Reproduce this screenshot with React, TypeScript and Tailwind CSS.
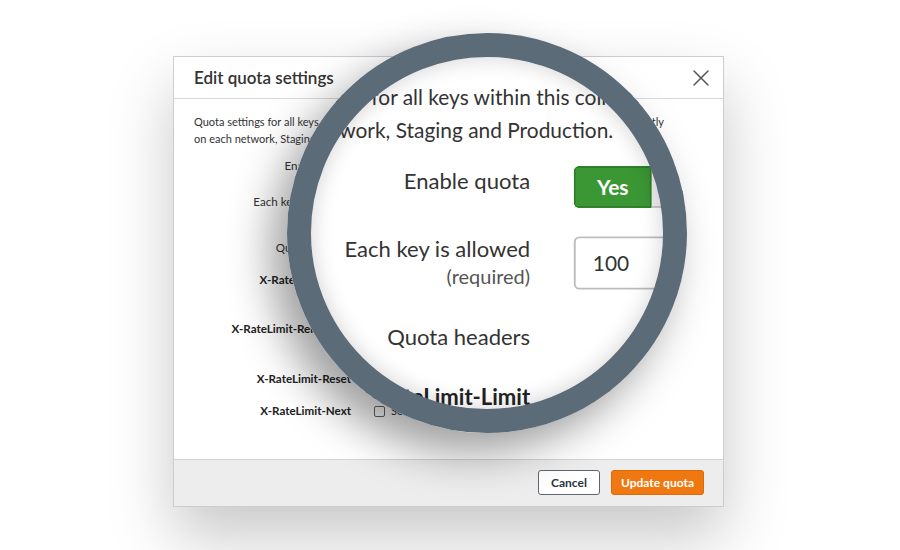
import { X } from 'lucide-react';

const headerRows = [
  { name: 'X-RateLimit-Limit', note: 'Total requests allowed in the period', h: 'h-[49px]' },
  { name: 'X-RateLimit-Remaining', note: 'Requests left in the period', h: 'h-[50px]' },
  { name: 'X-RateLimit-Reset', note: '', h: 'h-[32px]' },
  { name: 'X-RateLimit-Next', note: '', h: 'h-[32px]' },
];

function Dialog({ flat }: { flat?: boolean }) {
  return (
    <div
      className={`w-[551px] h-[451px] bg-white border border-[#c9ced4] flex flex-col ${
        flat ? '' : 'shadow-[0_30px_60px_rgba(0,0,0,0.22)]'
      }`}
    >
      {/* Header */}
      <div className="h-[42px] shrink-0 flex items-center justify-between pl-5 pr-[8px] border-b border-[#d6d9dd]">
        <h2 className="text-[17px] font-semibold text-[#333]">Edit quota settings</h2>
        <X size={28} strokeWidth={1.25} className="text-[#555]" />
      </div>

      {/* Body */}
      <div className="flex-1 px-5 pt-[14px] text-[11px] text-[#333]">
        <p className="leading-[17px] whitespace-nowrap">
          Quota settings for all keys within this collection are set and counted separately and independently
          <br />
          on each network, Staging and Production.
        </p>

        <div className="mt-[11px] flex flex-col text-[11.6px]">
          <div className="flex items-start gap-[23px] h-[22px]">
            <div className="w-[157px] text-right leading-4">Enable quota</div>
            <div className="flex h-[22px] rounded-[3px] overflow-hidden text-[11px]">
              <span className="w-[41px] flex items-center justify-center bg-[#3b9734] border border-[#2f7f29] text-white font-bold">
                Yes
              </span>
              <span className="w-[36px] flex items-center justify-center bg-[#efefef] border border-l-0 border-[#c8c8c8] text-[#555]">
                No
              </span>
            </div>
          </div>

          <div className="mt-[15px] flex items-start gap-[23px] h-[28px]">
            <div className="w-[157px] text-right -mt-px">
              <div className="leading-4">Each key is allowed</div>
              <div className="leading-[13px] text-[10.5px] text-[#555]">(required)</div>
            </div>
            <div className="w-[64px] h-[28px] border border-[#bdbdbd] rounded-[3px] flex items-center pl-[9px] text-[11px]">
              100
            </div>
          </div>

          <div className="mt-[17px] flex items-start gap-[23px] h-4">
            <div className="w-[157px] text-right leading-4">Quota headers</div>
          </div>

          <div className="mt-[16px] flex flex-col">
            {headerRows.map((row) => (
              <div key={row.name} className={`flex items-start gap-[23px] ${row.h}`}>
                <div className="w-[157px] text-right leading-4 font-bold text-[#222]">{row.name}</div>
                <div className="flex flex-col text-[11px]">
                  <label className="flex items-center gap-[6px] leading-4">
                    <span className="w-[11px] h-[11px] border border-[#666] rounded-[2px] bg-white" />
                    Send header
                  </label>
                  {row.note && <div className="leading-4 text-[10px] text-[#777] pl-[17px]">{row.note}</div>}
                </div>
              </div>
            ))}
          </div>
        </div>
      </div>

      {/* Footer */}
      <div className="h-[47px] shrink-0 bg-[#ededed] border-t border-[#d3d3d3] flex items-center justify-end gap-[11px] pr-[19px] pb-px">
        <button className="w-[62px] h-[25px] rounded-[3px] bg-white border border-[#5d6670] text-[12px] font-bold text-[#2b3540]">
          Cancel
        </button>
        <button className="w-[93px] h-[25px] rounded-[3px] bg-[#f07811] border border-[#de6a08] text-[12px] font-bold text-white">
          Update quota
        </button>
      </div>
    </div>
  );
}

function Scene({ flat }: { flat?: boolean }) {
  return (
    <div className="w-[900px] h-[550px] bg-white pl-[173px] pt-[56px]">
      <Dialog flat={flat} />
    </div>
  );
}

export default function App() {
  return (
    <div className="relative w-[900px] h-[550px] overflow-hidden bg-white font-['Lato','Open_Sans',sans-serif]">
      <Scene />

      {/* Magnifier */}
      <div className="absolute left-[287px] top-[33px] w-[400px] h-[400px]">
        <div className="absolute inset-0 rounded-full overflow-hidden bg-white">
          <div className="absolute left-[-287px] top-[-33px] w-[900px] h-[550px] origin-[152px_149px] scale-[1.9]">
            <Scene flat />
          </div>
        </div>
        <div className="absolute inset-0 rounded-full border-[24px] border-[#5c6b78] shadow-[-16px_20px_44px_rgba(0,0,0,0.38),inset_0_0_22px_rgba(0,0,0,0.18)]" />
      </div>
    </div>
  );
}
